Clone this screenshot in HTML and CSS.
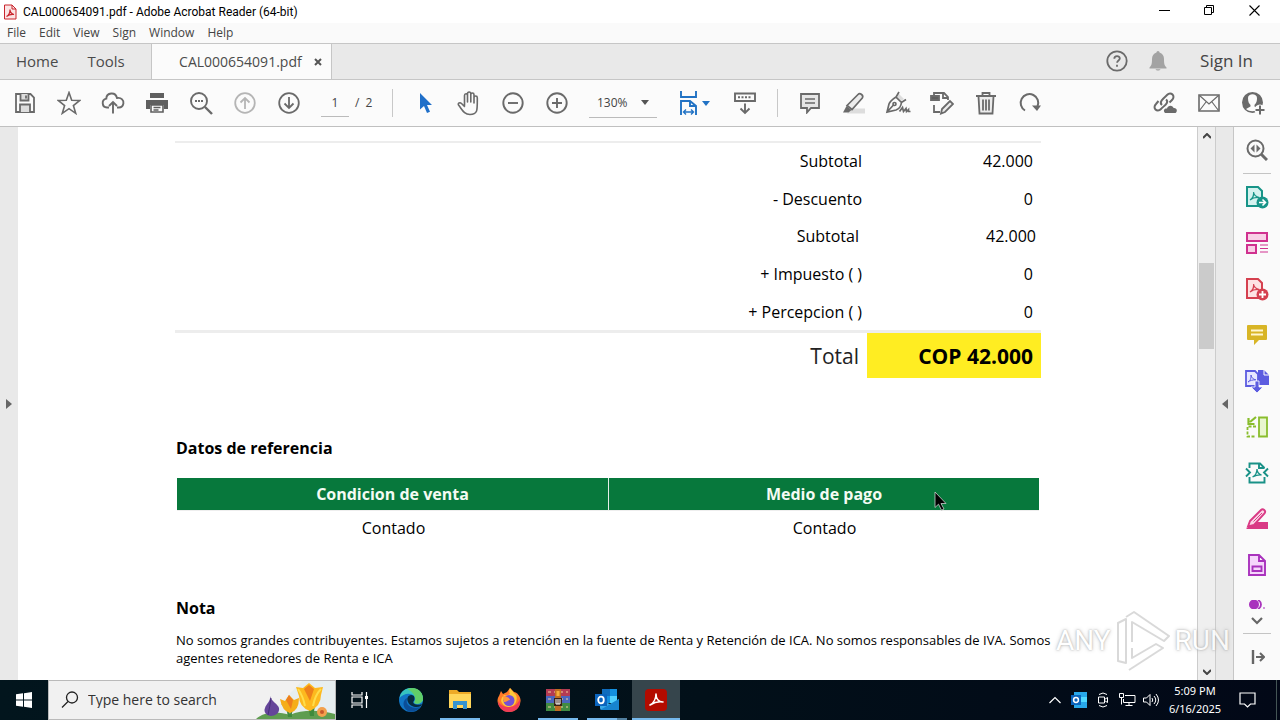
FILE: index.html
```html
<!DOCTYPE html>
<html lang="es">
<head>
<meta charset="utf-8">
<title>CAL000654091.pdf - Adobe Acrobat Reader (64-bit)</title>
<link rel="stylesheet" href="styles.css">
</head>
<body>
<header class="titlebar">
  <svg class="app-icon" width="14" height="16" viewBox="0 0 14 16"><path d="M1.500 1h7.500l4 4v10H1.500z" fill="#fbe4e4" stroke="#c9252d"/><path d="M9 1v4h4" fill="none" stroke="#c9252d"/><path d="M3.500 12.500c2-1 3.500-4 3.500-7 0 3 2 4.500 4 5-3-.5-5.500.5-7.500 2z" fill="none" stroke="#c9252d" stroke-width="1.200"/></svg>
  <span class="title">CAL000654091.pdf - Adobe Acrobat Reader (64-bit)</span>
  <button class="win-btn" aria-label="Minimize"><svg width="11" height="11"><path d="M0 5.500h11" stroke="#000"/></svg></button>
  <button class="win-btn" aria-label="Restore"><svg width="11" height="11" fill="none" stroke="#000"><path d="M.5 2.500h7v7h-7zM2.500 2.500v-2h7v7h-2"/></svg></button>
  <button class="win-btn" aria-label="Close"><svg width="11" height="11"><path d="M.5.500l10 10m0-10l-10 10" stroke="#000" stroke-width="1.100"/></svg></button>
</header>
<nav class="menubar">
  <button>File</button><button>Edit</button><button>View</button><button>Sign</button><button>Window</button><button>Help</button>
</nav>
<div class="tabbar">
  <button class="nav-tab">Home</button>
  <button class="nav-tab tools">Tools</button>
  <div class="doc-tab"><span>CAL000654091.pdf</span><button aria-label="Close tab"><svg width="8" height="8"><path d="M1 1l6 6m0-6L1 7" stroke="#555" stroke-width="2"/></svg></button></div>
  <button class="tab-icon" aria-label="Help"><svg width="22" height="22" viewBox="0 0 22 22" fill="none" stroke="#6b6b6b" stroke-width="1.800"><circle cx="11" cy="11" r="9.700"/><path d="M8.300 8.700c0-3.400 5.500-3.300 5.500-.2 0 2-2.700 2-2.700 4.300"/><path d="M11 14.700v2"/></svg></button>
  <button class="tab-icon" aria-label="Notifications"><svg width="18" height="20" viewBox="0 0 18 20" fill="#a3a3a3"><path d="M9 0c1 0 1.500.8 1.500 1.600C13.500 2.500 15 5 15 8c0 5 .5 6.500 2.500 8.500v1H.5v-1C2.500 14.500 3 13 3 8c0-3 1.500-5.500 4.500-6.400C7.500.8 8 0 9 0zM6.500 18.300h5c-.5 1.600-4.500 1.600-5 0z"/></svg></button>
  <button class="sign-in">Sign In</button>
</div>
<div class="toolbar">
  <button class="tool" aria-label="Save"><svg width="22" height="22" viewBox="0 0 22 22" fill="none" stroke="#6a6a6a" stroke-width="1.800"><path d="M2 2h14.500L20 5.500V20H2z"/><path d="M6.500 2v6.500h8V2M6 20v-7.500h10V20" fill="#ddd"/><path d="M12 3.500v3"/></svg></button>
  <button class="tool" aria-label="Star"><svg width="24" height="24" viewBox="0 0 24 24"><path d="M12 1.600l2.700 7.700 8.100.2-6.400 5 2.300 7.800-6.700-4.600-6.700 4.600 2.300-7.800-6.400-5 8.100-.2z" fill="none" stroke="#6a6a6a" stroke-width="1.600"/></svg></button>
  <button class="tool" aria-label="Upload"><svg width="24" height="24" viewBox="0 0 24 24" fill="none" stroke="#6a6a6a" stroke-width="1.900"><path d="M8 16.500H6a4.500 4.500 0 0 1-.7-8.900C5.500 1.500 14.500.3 16 7c4.500-.8 7 2.500 6.400 5.500-.5 2.500-2 4-4.400 4h-2M12 22.500V11M8 15l4-4 4 4"/></svg></button>
  <button class="tool" aria-label="Print"><svg width="22" height="22" viewBox="0 0 22 22"><path d="M4 1h14v5H4zM0 8h22v9h-4v-4H4v4H0z" fill="#5f5f5f"/><path d="M5 13h12v7H5zM7.500 15.500h7M7.500 18h5" fill="none" stroke="#5f5f5f" stroke-width="1.600"/></svg></button>
  <button class="tool" aria-label="Find"><svg width="24" height="24" viewBox="0 0 24 24" fill="none" stroke="#6a6a6a"><circle cx="10" cy="10" r="8" stroke-width="1.900"/><path d="M16 16l7 7" stroke-width="2.400"/><path d="M6 10h8.500" stroke-width="2" stroke-dasharray="2 1"/></svg></button>
  <button class="tool" aria-label="Previous page"><svg width="22" height="22" viewBox="0 0 22 22" fill="none" stroke="#b5b5b5" stroke-width="1.800"><circle cx="11" cy="11" r="9.800"/><path d="M11 17V6M6.500 10.500L11 6l4.500 4.500"/></svg></button>
  <button class="tool" aria-label="Next page"><svg width="22" height="22" viewBox="0 0 22 22" fill="none" stroke="#6a6a6a" stroke-width="1.800"><circle cx="11" cy="11" r="9.800"/><path d="M11 5v11M6.500 11.500L11 16l4.500-4.500"/></svg></button>
  <div class="pager"><input type="text" value="1" aria-label="Page number"><span>/</span><span>2</span></div>
  <span class="divider"></span>
  <button class="tool" aria-label="Select"><svg width="14" height="22" viewBox="0 0 14 22"><path d="M2 1v16.500l4-3.500 3 7 3-1.300-3-6.700h5z" fill="#1f6fc9"/></svg></button>
  <button class="tool" aria-label="Pan"><svg width="24" height="26" viewBox="0 0 24 26" fill="none" stroke="#6a6a6a" stroke-width="1.600" stroke-linecap="round" stroke-linejoin="round"><path d="M7.500 15.500V5.500c0-2.300 3-2.300 3 0V12 3.700c0-2.300 3.300-2.300 3.300 0V12 4.700c0-2.200 3.200-2.200 3.200 0V13 7.700c0-2.200 3.300-2.200 3.300 0C20.300 20 21 24.500 13 24.500c-6 0-7.500-4.500-11.500-9.500-1-2 1.500-3 3-1.500l3 3"/></svg></button>
  <button class="tool" aria-label="Zoom out"><svg width="22" height="22" viewBox="0 0 22 22" fill="none" stroke="#6a6a6a" stroke-width="1.900"><circle cx="11" cy="11" r="9.700"/><path d="M6 11h10"/></svg></button>
  <button class="tool" aria-label="Zoom in"><svg width="22" height="22" viewBox="0 0 22 22" fill="none" stroke="#6a6a6a" stroke-width="1.900"><circle cx="11" cy="11" r="9.700"/><path d="M6 11h10M11 6v10"/></svg></button>
  <div class="zoom-box"><select aria-label="Zoom level"><option>130%</option></select><svg width="8" height="5"><path d="M0 0h8L4 5z" fill="#555"/></svg></div>
  <button class="tool fit" aria-label="Fit width"><svg width="32" height="26" viewBox="0 0 32 26" fill="none" stroke="#2172c4" stroke-width="1.900"><path d="M3 1v6h15V1M3 25V11h9l6 5v9M12 11v5h6"/><path d="M6 22h9M8 19.500L5.500 22 8 24.500M13 19.500l2.500 2.500-2.500 2.500" stroke-width="1.400"/><path d="M24 11h8l-4 5z" fill="#2172c4" stroke="none"/></svg></button>
  <button class="tool" aria-label="Page display"><svg width="24" height="24" viewBox="0 0 24 24" fill="none" stroke="#6a6a6a" stroke-width="1.900"><path d="M2 2.500h20V10H2z"/><path d="M5 6.300h14" stroke-dasharray="2 1.500"/><path d="M12 12.500V22M7.500 17.500L12 22l4.500-4.500"/></svg></button>
  <span class="divider"></span>
  <button class="tool" aria-label="Comment"><svg width="22" height="22" viewBox="0 0 22 22" fill="#e6e6e6" stroke="#6a6a6a" stroke-width="1.800"><path d="M2 2h18v14h-8l-4 4.500V16H2z"/><path d="M6 7h10M6 11h10" stroke-width="1.400"/></svg></button>
  <button class="tool" aria-label="Highlight"><svg width="24" height="24" viewBox="0 0 24 24"><path d="M10 17.500h13v5H5z" fill="#ddd"/><path d="M5 14.500L16 3.500c2-2 6 .8 4.300 3.500L10 18.500z" fill="#ececec" stroke="#6a6a6a" stroke-width="1.700"/><path d="M4.500 15l5 4-3 2.500H1z" fill="#6a6a6a"/></svg></button>
  <button class="tool" aria-label="Sign document"><svg width="26" height="24" viewBox="0 0 26 24" fill="none" stroke="#6a6a6a" stroke-width="1.700"><path d="M13 2l6 6-3 2-5-5z" fill="#ddd" stroke="none"/><path d="M14 1l-3 5 5.500 5.500 4.500-3M11 6c-3 2-6 4-7 7l-2 8 9-2c3-1 5-4 5.500-7.500M2 21l6.500-7M14.500 20.500l3-4 1 4 2.500-3 .5 3 2-2v2h2"/><circle cx="9.500" cy="13" r="1.500"/></svg></button>
  <button class="tool" aria-label="Edit document"><svg width="24" height="24" viewBox="0 0 24 24" fill="none" stroke="#6a6a6a" stroke-width="1.800"><path d="M1 5h8v4H1z" fill="#5f5f5f"/><path d="M4 5V2h10l4 4v3M13 2v5h5M4 14v7h6"/><path d="M12 18l8-8 3 3-8 8-4 1.500z" fill="#ececec"/></svg></button>
  <button class="tool" aria-label="Delete"><svg width="22" height="24" viewBox="0 0 22 24" fill="none" stroke="#6a6a6a" stroke-width="1.800"><path d="M3.500 5.500l1 17h13l1-17" fill="#ececec"/><path d="M1 5h20M7.500 5V2h7v3M8 8.500v11M11 8.500v11M14 8.500v11"/></svg></button>
  <button class="tool" aria-label="Rotate"><svg width="24" height="22" viewBox="0 0 24 22" fill="none" stroke="#6a6a6a" stroke-width="2"><path d="M7 18.500a8.800 8.800 0 1 1 12.500-4"/><path d="M14 13.500h9L19 19z" fill="#6a6a6a" stroke="none"/></svg></button>
  <div class="tool-end">
    <button class="tool" aria-label="Share link"><svg width="26" height="24" viewBox="0 0 26 24"><g fill="none" stroke="#6a6a6a" stroke-width="2"><path d="M10 14c-4-3 3-8 5-10 4-4 9 1 5 5l-2.500 2.500M14 8.500c4 3-3 7-5 9.500-4 4-9-1-5-5L6.500 10"/></g><path d="M13 22c-2.500-3 0-5 2-4.500 1-4 6-3.500 6.500-.5 4-.5 4 4 2 5z" fill="#6a6a6a"/></svg></button>
    <button class="tool" aria-label="Email"><svg width="22" height="18" viewBox="0 0 22 18" fill="none" stroke="#6a6a6a" stroke-width="1.600"><path d="M1 1h20v16H1z"/><path d="M1.500 1.500L11 10l9.500-8.500M1.500 16.500L8 8M20.500 16.500L14 8" stroke-width="1.200"/></svg></button>
    <button class="tool" aria-label="Account"><svg width="24" height="24" viewBox="0 0 24 24"><circle cx="11.500" cy="11.500" r="10.500" fill="#6a6a6a"/><path d="M7 7c0-5 9-5 9 0 0 4-1 5-2.500 7v1.500l4 2.500c-3 3-9 3-12.500 0l4.500-2.500V14C8 12.500 7 11 7 7z" fill="#fbfbfb"/><circle cx="19" cy="19" r="5.500" fill="#fbfbfb"/><path d="M19 14.500v9M14.500 19h9" stroke="#6a6a6a" stroke-width="2"/></svg></button>
  </div>
</div>
<div class="workspace">
  <button class="pane-toggle left" aria-label="Show left pane"><svg width="6" height="10"><path d="M0 0l6 5-6 5z" fill="#666"/></svg></button>
  <main class="page">
    <table class="totals">
      <tbody>
        <tr><th scope="row">Subtotal</th><td>42.000</td></tr>
        <tr class="discount"><th scope="row">- Descuento</th><td>0</td></tr>
        <tr class="net"><th scope="row">Subtotal</th><td>42.000</td></tr>
        <tr><th scope="row">+ Impuesto ( )</th><td>0</td></tr>
        <tr class="last"><th scope="row">+ Percepcion ( )</th><td>0</td></tr>
      </tbody>
      <tfoot><tr><th scope="row">Total</th><td>COP 42.000</td></tr></tfoot>
    </table>
    <h2>Datos de referencia</h2>
    <table class="reference">
      <thead><tr><th>Condicion de venta</th><th>Medio de pago</th></tr></thead>
      <tbody><tr><td>Contado</td><td>Contado</td></tr></tbody>
    </table>
    <h2>Nota</h2>
    <p class="note">No somos grandes contribuyentes. Estamos sujetos a retención en la fuente de Renta y Retención de ICA. No somos responsables de IVA. Somos agentes retenedores de Renta e ICA</p>
  </main>
  <div class="scrollbar">
    <svg width="8" height="6"><path d="M0 5l4-4 4 4" fill="none" stroke="#444" stroke-width="2"/></svg>
    <div class="track"><div class="thumb"></div></div>
    <svg width="8" height="6"><path d="M0 1l4 4 4-4" fill="none" stroke="#444" stroke-width="2"/></svg>
  </div>
  <button class="pane-toggle right" aria-label="Hide right pane"><svg width="6" height="10"><path d="M6 0L0 5l6 5z" fill="#666"/></svg></button>
  <aside class="side">
    <button aria-label="Search tools"><svg width="22" height="22" viewBox="0 0 22 22" fill="none" stroke="#6a6a6a"><circle cx="9.500" cy="9.500" r="8" stroke-width="2"/><path d="M15 15l6 6" stroke-width="3"/><path d="M8.500 5.500v8l-4-4zM10.500 5.500v8l4-4z" fill="#6a6a6a" stroke="none"/></svg></button>
    <hr>
    <button aria-label="Export PDF"><svg width="24" height="24" viewBox="0 0 24 24"><path d="M2 2h11l4 4v15H2z" fill="#d5f2ef" stroke="#179488" stroke-width="2"/><path d="M5 15c3-2 4-5 3.500-8 .5 4 3 5 6 5.500-4-.5-7 .5-9.500 2.500z" fill="none" stroke="#179488" stroke-width="1.200"/><circle cx="17.500" cy="17.500" r="6" fill="#179488"/><path d="M14 17.500h6M17.500 14.500l3 3-3 3" fill="none" stroke="#fff" stroke-width="1.600"/></svg></button>
    <button aria-label="Organize pages"><svg width="24" height="24" viewBox="0 0 24 24" fill="#f9cfe6" stroke="#d0318f" stroke-width="2"><path d="M2 2h20v8H2zM2 14h9v8H2z"/><path d="M15 14h8M15 17.500h8M15 21h8" stroke-width="1.200"/></svg></button>
    <button aria-label="Create PDF"><svg width="24" height="24" viewBox="0 0 24 24"><path d="M2 2h11l4 4v15H2z" fill="#fde3e3" stroke="#d5404f" stroke-width="2"/><path d="M5 15c3-2 4-5 3.500-8 .5 4 3 5 6 5.500-4-.5-7 .5-9.500 2.500z" fill="none" stroke="#d5404f" stroke-width="1.200"/><circle cx="17.500" cy="17.500" r="6" fill="#d5404f"/><path d="M14 17.500h7M17.500 14v7" stroke="#fff" stroke-width="1.800"/></svg></button>
    <button aria-label="Comment"><svg width="20" height="22" viewBox="0 0 20 22"><path d="M1 1h18q1 0 1 1v13q0 1-1 1h-7l-5 5v-5H1q-1 0-1-1V2q0-1 1-1z" fill="#d8b526"/><path d="M4 6.500h12M4 10.500h12" stroke="#fff6cf" stroke-width="1.800"/></svg></button>
    <button aria-label="Combine files"><svg width="24" height="24" viewBox="0 0 24 24"><path d="M13 1h6l5 5v10H13z" fill="#5c5ce0"/><path d="M19 1v5h5" stroke="#fff" fill="none"/><path d="M1 2h9l3 3v12H1z" fill="#e8e8ff" stroke="#5c5ce0" stroke-width="1.800"/><path d="M3 13c3-2 3-4 3-7 .5 3 2 4 5 5-3-.5-6 .5-8 2z" fill="none" stroke="#5c5ce0"/><path d="M10 12h4v6h4l-6 6-6-6h4z" fill="#5c5ce0" stroke="#fff" stroke-width=".8"/></svg></button>
    <button aria-label="Compress page"><svg width="22" height="22" viewBox="0 0 22 22" fill="none" stroke="#89bd2d" stroke-width="1.800"><path d="M13 1.500h8v19h-8z" fill="#e9f6cf"/><path d="M10 10.500H1.500v10H10" stroke-dasharray="3 1.500"/><path d="M10 1L4 6M2.500 2v6h6" stroke-width="2.200"/></svg></button>
    <button aria-label="Optimize PDF"><svg width="24" height="22" viewBox="0 0 24 22" fill="none" stroke="#199187" stroke-width="1.900"><path d="M4.500 6V1.500H15L19.500 6M4.500 15v5.500h15V15"/><path d="M14 1.500V6h5.500M1 6.500l4 4-4 4M23 6.500l-4 4 4 4"/><path d="M7.500 15c3-1.500 4.500-4 4.500-8 0 3.500 1.500 5 4.500 6-4-.5-6 .5-9 2z" stroke-width="1.300"/></svg></button>
    <button aria-label="Redact"><svg width="24" height="22" viewBox="0 0 24 22"><path d="M9 14h14v7H1l4-4z" fill="#d93a85"/><path d="M5 13L16 2c2-2 5.500 1 3.500 3.500L9 17l-6 1.500z" fill="#fbd6e7" stroke="#d93a85" stroke-width="1.900"/><path d="M8.500 13.500L17 5" stroke="#d93a85"/></svg></button>
    <button aria-label="Prepare form"><svg width="18" height="22" viewBox="0 0 18 22" fill="#f5d5fb" stroke="#a932bd" stroke-width="1.900"><path d="M1 1h10l6 6v14H1zM11 1v6h6M4.500 12.500h9V17h-9z"/></svg></button>
    <button class="clipped" aria-label="More"><svg width="18" height="9" viewBox="0 0 18 9"><circle cx="6" cy="4.500" r="5" fill="#a932bd"/><path d="M10 0c4 2 4 7 0 9" fill="none" stroke="#a932bd" stroke-width="1.800"/><path d="M15 8h2" stroke="#a932bd"/></svg></button>
    <button class="more" aria-label="Scroll tools"><svg width="12" height="8"><path d="M1 1l5 5 5-5" fill="none" stroke="#666" stroke-width="2.200"/></svg></button>
    <hr>
    <button aria-label="Collapse pane"><svg width="16" height="16" viewBox="0 0 16 16" fill="none" stroke="#666" stroke-width="2"><path d="M4 1v14" stroke-width="2.400"/><path d="M7 8h8M11 4l4 4-4 4"/></svg></button>
  </aside>
</div>
<footer class="taskbar">
  <button class="start" aria-label="Start"><svg width="16" height="16" viewBox="0 0 16 16" fill="#fff"><path d="M0 2.300l7-1v6.200H0zM8 1.200L16 0v7.500H8zM0 8.500h7v6.200l-7-1zM8 8.500h8V16l-8-1.200z"/></svg></button>
  <div class="search">
    <svg width="18" height="18" viewBox="0 0 18 18" fill="none" stroke="#222" stroke-width="1.300"><circle cx="11" cy="6.500" r="5.500"/><path d="M7 10.500L1 16.500"/></svg>
    <input type="text" placeholder="Type here to search" aria-label="Search">
    <svg width="79" height="38" viewBox="0 0 79 38"><path d="M46 0h33v38H10z" fill="#e6eef0"/><path d="M0 38c10-9 24-7 34-4 12-6 32-5 45-1v5z" fill="#5f9d50"/><path d="M32 36q-1-10-7-13 7 1 9 10 1-8 6-9-5 6-4 12zM54 35q-1-11-8-15 8 2 9 10 1-7 8-10-6 6-5 15z" fill="#3f8a3c"/><path d="M14 15c1 5 8 8 9 12 1 5-4 8-8 8s-8-4-6-8c1-4 6-7 5-12z" fill="#65459a"/><path d="M15 17q-1 8-3 17" stroke="#47307a" fill="none"/><path d="M24 18l5 2 4-6 5 5 5-2q0 13-9 15-8-2-10-14z" fill="#f5ad18"/><path d="M30 19l3-5 4 5-2 9z" fill="#ee7e1d"/><path d="M40 6l7 1 6-5 6 5 8-1-2 8q0 11-11 16-11-4-11-15z" fill="#fdb91e"/><path d="M48 8l5-4 5 4-4 12z" fill="#ee811a"/><path d="M42 8q5 7 7 17M65 8q-6 6-8 17" stroke="#ffdd4a" stroke-width="2" fill="none"/><circle cx="66" cy="31" r="5" fill="#f3a14d"/><circle cx="66" cy="31" r="2" fill="#c8582a"/></svg>
  </div>
  <button class="task view" aria-label="Task view"><svg width="18" height="16" viewBox="0 0 18 16" fill="none" stroke="#fff" stroke-width="1.200"><path d="M1 0v3h10V0M1 5h10v6H1zM1 16v-3h10v3M15.500 0v16"/><path d="M14 4h3v3h-3z" fill="#fff" stroke="none"/></svg></button>
  <button class="task" aria-label="Edge"><svg width="26" height="26" viewBox="0 0 26 26"><circle cx="13" cy="13" r="12" fill="#1176c6"/><path d="M1.500 11C3 3 9 1 13 1c8 0 12 5 12 11 0 5-8 7-9 3 1-2 2-3 0-6-4-4-11-2-14.500 2z" fill="#36c4c0"/><path d="M14 1c8 0 11 6 11 11 0 4-6 6-9 4 3-5 0-11-7-14z" fill="#61ce68"/><path d="M9.500 11c-3 5 2 12 13 9-3 4-8 5.500-12 4.500-7-4-6-12-1-13.500z" fill="#0b4e98"/><path d="M16 9c-5-3-8 2-6 6 2 5 9 6 13 4l1-2c-5 2-9 0-9-2 1-1 2-3 1-6z" fill="#062b40"/></svg></button>
  <button class="task open" aria-label="File Explorer"><svg width="22" height="20" viewBox="0 0 22 20"><path d="M0 2V0h8l2 2h12v16H0z" fill="#edaa27"/><path d="M0 4h22v14H0z" fill="#ffd65a"/><path d="M4 11h14v8h-4v-4H8v4H4z" fill="#3393cf"/></svg></button>
  <button class="task" aria-label="Firefox"><svg width="24" height="24" viewBox="0 0 24 24"><path d="M2 8L4 3l2 3 4-2 3-4 4 4c3 0 7 5 6.500 9C23 20 18 24 12 24S1 19 .5 13c0-2 .5-4 1.500-5z" fill="#ff7a29"/><path d="M13 0l4 5c4 2 3 8 1 11-3 4-10 4-13-1-2-3 0-6 2-8 2 1 4 0 6-1-1-2-1-4 0-6z" fill="#ffc83a"/><path d="M1 13c2 4 6 6 11 6s9-3 11-8c1 8-4 13-11 13S1 19 1 13z" fill="#ef3b58"/><circle cx="12" cy="12.500" r="5.500" fill="#7550d5"/><path d="M6 8c3 0 7 2 7 4-2 0-3 2-6 2z" fill="#ff963a"/></svg></button>
  <button class="task open" aria-label="WinRAR"><svg width="24" height="22" viewBox="0 0 24 22"><path d="M0 0h24v7H0z" fill="#b33b53"/><path d="M0 7h24v7H0z" fill="#4a66be"/><path d="M0 14h24v8H0z" fill="#418b43"/><path d="M2 3h20M2 10h20M2 18h20" stroke="#f1d29c" stroke-dasharray="3 3"/><path d="M9 0h6v22H9z" fill="#bf6c22"/><path d="M8 9h8v8H8z" fill="#3a2116"/><path d="M10 10v5h4v-5M12 10v5" fill="none" stroke="#fff"/><path d="M10.500 2h3v5h-3z" fill="#f5ad3a"/></svg></button>
  <button class="task open multi" aria-label="Outlook"><svg width="24" height="22" viewBox="0 0 24 22"><path d="M7 0h15v14H7z" fill="#1490df"/><path d="M7 0h8v7H7z" fill="#0f6cbd"/><path d="M15 7h7v7h-7z" fill="#50d0ff"/><path d="M5 11l10 4 9-5v11H7q-2 0-2-2z" fill="#38a9e8"/><path d="M5 21l19-11v11z" fill="#1784d0"/><path d="M0 5h12v12H0z" fill="#0b64bd"/><ellipse cx="6" cy="11" rx="2.800" ry="3.300" fill="none" stroke="#fff" stroke-width="1.800"/></svg></button>
  <button class="task open active" aria-label="Acrobat Reader"><svg width="22" height="22" viewBox="0 0 22 22"><rect width="22" height="22" rx="4" fill="#b30b00"/><path d="M5 16c4-2 6-7 6-11 0 5 3 8 7 8-5-1-9 .5-13 3z" fill="none" stroke="#fff" stroke-width="1.600" stroke-linejoin="round"/></svg></button>
  <div class="tray">
    <button aria-label="Show hidden icons"><svg width="12" height="8"><path d="M.5 7L6 1.500 11.500 7" fill="none" stroke="#fff" stroke-width="1.200"/></svg></button>
    <button aria-label="Outlook"><svg width="16" height="16" viewBox="0 0 16 16"><path d="M3 0h13v16H3z" fill="#28a8ea"/><path d="M9 5h7v5H9z" fill="#50d9ff"/><path d="M0 3h10v10H0z" fill="#0a63bb"/><circle cx="5" cy="8" r="2.400" fill="none" stroke="#fff" stroke-width="1.500"/></svg></button>
    <button aria-label="Meet now"><svg width="12" height="16" viewBox="0 0 12 16" fill="none" stroke="#fff"><path d="M1.500 5h6v6h-6zM7.500 7.500l3-2v5l-3-2M2 2.500q4-3 8 0M2 13.500q4 3 8 0"/></svg></button>
    <button aria-label="Network"><svg width="17" height="14" viewBox="0 0 17 14" fill="none" stroke="#fff"><path d="M6 2.500h10v7H4.500V6M10 9.500v3M6.500 12.500h7M.5.500h4v4h-4zM2.500 4.500v7"/></svg></button>
    <button aria-label="Volume"><svg width="17" height="14" viewBox="0 0 17 14" fill="none" stroke="#fff"><path d="M.5 5h3l3.500-3.500v11L3.500 9h-3zM9 5q1.500 2 0 4M11 3q3.500 4 0 8M13 1q5 6 0 12"/></svg></button>
    <button class="clock"><span>5:09 PM</span><span>6/16/2025</span></button>
    <button class="notify" aria-label="Notifications"><svg width="17" height="16" viewBox="0 0 17 16" fill="none" stroke="#fff" stroke-width="1.200"><path d="M1 1h15v11h-4.500L8.500 15l-3-3H1z"/></svg></button>
    <span class="peek"></span>
  </div>
</footer>
<div class="watermark"><span>ANY</span><svg width="56" height="64" viewBox="0 0 56 64" fill="none" stroke-linejoin="round"><path d="M3 52V14l8-4v44zM11 8l8-5 35 24-5 5L17 13v20M17 39v10l24-14 7 4L14 61" stroke="#cacaca" stroke-width="2" fill="#fff"/></svg><span>RUN</span></div>
<svg class="cursor" width="13" height="20" viewBox="0 0 13 20"><path d="M1 1v15.500l3.500-3.300 3 6 2.500-1.200-3-5.500h5z" fill="#000" stroke="#ccc" stroke-width=".8"/></svg>
</body>
</html>
```
FILE: styles.css
```css
* { box-sizing: border-box; }
body {
  margin: 0;
  height: 100vh;
  display: flex;
  flex-direction: column;
  overflow: hidden;
  position: relative;
  background: #fff;
  color: #000;
  font: 12px/16px "Open Sans", "Noto Sans", sans-serif;
}
button { display: flex; align-items: center; justify-content: center; padding: 0; border: 0; background: none; font: inherit; color: inherit; flex: none; }
svg { display: block; flex: none; }
input, select { font: inherit; color: inherit; background: none; border: 0; border-radius: 0; padding: 0; min-width: 0; }

.titlebar { display: flex; align-items: center; height: 23px; padding: 0 3px; }
.title { flex: 1; margin-left: 6px; font-family: Roboto, sans-serif; }
.win-btn { width: 45px; height: 21px; align-self: flex-start; }
.menubar { display: flex; align-items: center; gap: 13px; height: 20px; padding-left: 7px; background: #fafafa; color: #444; }

.tabbar { display: flex; height: 37px; background: #e9e9e9; border-top: 1px solid #c6c6c6; border-bottom: 1px solid #c6c6c6; font-size: 14px; color: #4b4b4b; }
.nav-tab { height: 34px; padding-left: 16px; font-size: 15px; }
.tools { padding: 0 26px 0 29px; }
.doc-tab { display: flex; align-items: center; justify-content: flex-end; gap: 12px; width: 181px; padding-right: 9px; background: #fbfbfb; border: solid #c6c6c6; border-width: 0 1px; margin-right: auto; }
.tab-icon { width: 41px; height: 34px; }
.sign-in { width: 102px; height: 34px; padding-right: 5px; font-size: 17px; color: #444; }

.toolbar { display: flex; align-items: center; height: 47px; padding: 0 5px 0 3px; background: #fbfbfb; border-bottom: 1px solid #c0c0c0; color: #444; }
.tool { width: 44px; height: 40px; }
.pager { display: flex; align-items: center; gap: 6px; width: 81px; padding-left: 10px; }
.pager input { width: 28px; height: 28px; text-align: center; border-bottom: 1px solid #bbb; }
.divider { width: 1px; height: 28px; margin-right: 10px; background: #c8c8c8; }
.zoom-box { display: grid; align-items: center; width: 68px; margin: 0 10px; border-bottom: 1px solid #bbb; }
.zoom-box select { grid-area: 1 / 1; appearance: none; height: 28px; padding-left: 8px; }
.zoom-box svg { grid-area: 1 / 1; justify-self: end; margin-right: 8px; pointer-events: none; }
.fit { width: 54px; margin-right: 2px; }
.fit + .tool { margin-right: 10px; }
.tool-end { display: flex; margin-left: auto; }

.workspace { display: flex; flex: 1; min-height: 0; background: #e9e9e9; }
.pane-toggle.left { width: 18px; }
.pane-toggle.right { width: 17px; }
.page { flex: 1; min-width: 0; padding: 14px 156px 0 157px; overflow: hidden; background: #fff; font-size: 16px; line-height: 22px; }
.scrollbar { display: flex; flex-direction: column; align-items: center; width: 19px; padding: 6px 1px 5px; background: #efefef; border: solid #ccc; border-width: 0 1px; }
.track { flex: 1; width: 100%; padding-top: 124px; }
.thumb { height: 86px; background: #cbcbcb; }

.totals { width: 100%; border-collapse: separate; border-spacing: 0; border-top: 2px solid #ededed; text-align: right; }
.totals th, .totals td { height: 38px; padding: 7px 8px 0 0; font-weight: 400; text-align: right; vertical-align: top; }
.totals td { width: 174px; }
.totals th { padding-right: 5px; }
.totals .discount > * { height: 37px; }
.totals .last > * { height: 36px; }
.totals .net th { padding-right: 8px; }
.totals .net td { padding-right: 5px; }
.totals tfoot th, .totals tfoot td { height: 48px; border-top: 3px solid #ededed; padding: 0 8px 0 0; font-size: 21px; vertical-align: middle; }
.totals tfoot th { color: #222; }
.totals tfoot td { background: #ffed22; background-clip: padding-box; font-weight: 700; }
h2 { margin: 0; font-size: 16px; line-height: 22px; padding-left: 1px; }
.totals + h2 { margin-top: 59px; }
.reference { width: calc(100% - 4px); margin: 19px 2px 52px; border-collapse: separate; border-spacing: 0; table-layout: fixed; text-align: center; }
.reference th { height: 33px; padding: 0 0 1px; background: #07783c; background-clip: padding-box; color: #f4fbf3; border-bottom: 1px solid #eee; }
.reference th + th { border-left: 1px solid #e5eee8; }
.reference td { height: 34px; padding: 0 0 0 2px; }
.note { margin: 12px -16px 0 0; padding-left: 1px; font-size: 13px; line-height: 18px; }

.side { display: flex; flex-direction: column; align-items: stretch; width: 47px; background: #fafafa; border-left: 1px solid #c6c6c6; }
.side button { height: 46px; }
.side hr { width: 28px; height: 1px; margin: 0 auto; border: 0; background: #c4c4c4; }
.side .clipped { height: 21px; align-items: flex-end; }
.side .more { height: 24px; }

.taskbar { display: flex; height: 40px; background: linear-gradient(90deg, #02151d, #021019 55%, #020817); color: #fff; }
.start { width: 48px; }
.search { display: flex; align-items: center; width: 288px; padding-left: 12px; background: #f1f1f1; border: 1px solid #bababa; color: #333; }
.search input { flex: 1; margin-left: 9px; font-size: 14px; }
.search input::placeholder { color: #333; opacity: 1; }
.task { width: 48px; margin-right: 1px; border: solid transparent; border-width: 2px 4px; background-clip: border-box; }
.task.view { margin-right: 3px; }
.task.open { background: linear-gradient(#76b9ed, #76b9ed) bottom / 100% 2px no-repeat border-box; border-width: 2px 0; width: 40px; margin: 0 5px 0 4px; }
.task.multi { background-size: 30px 2px, 100% 2px; background-image: linear-gradient(#76b9ed, #76b9ed), linear-gradient(#517f9f, #517f9f); background-position: left bottom; }
.task.active { width: 48px; margin: 0; background-color: #36454c; }
.tray { display: flex; margin-left: auto; }
.tray button { width: 24px; }
.tray .clock { flex-direction: column; width: 64px; line-height: 18px; font-family: "Noto Sans", sans-serif; font-size: 11px; }
.tray .notify { width: 40px; }
.peek { width: 1px; margin: 0 3px 0 9px; background: #455; }

.watermark { position: absolute; right: 50px; bottom: 47px; display: flex; align-items: center; gap: 4px; opacity: .7; pointer-events: none; font: 28px/64px Roboto, sans-serif; color: #fff; text-shadow: 0 0 2px #888, 0 0 4px #bbb; }
.cursor { position: absolute; left: 934px; top: 491px; pointer-events: none; }
```
